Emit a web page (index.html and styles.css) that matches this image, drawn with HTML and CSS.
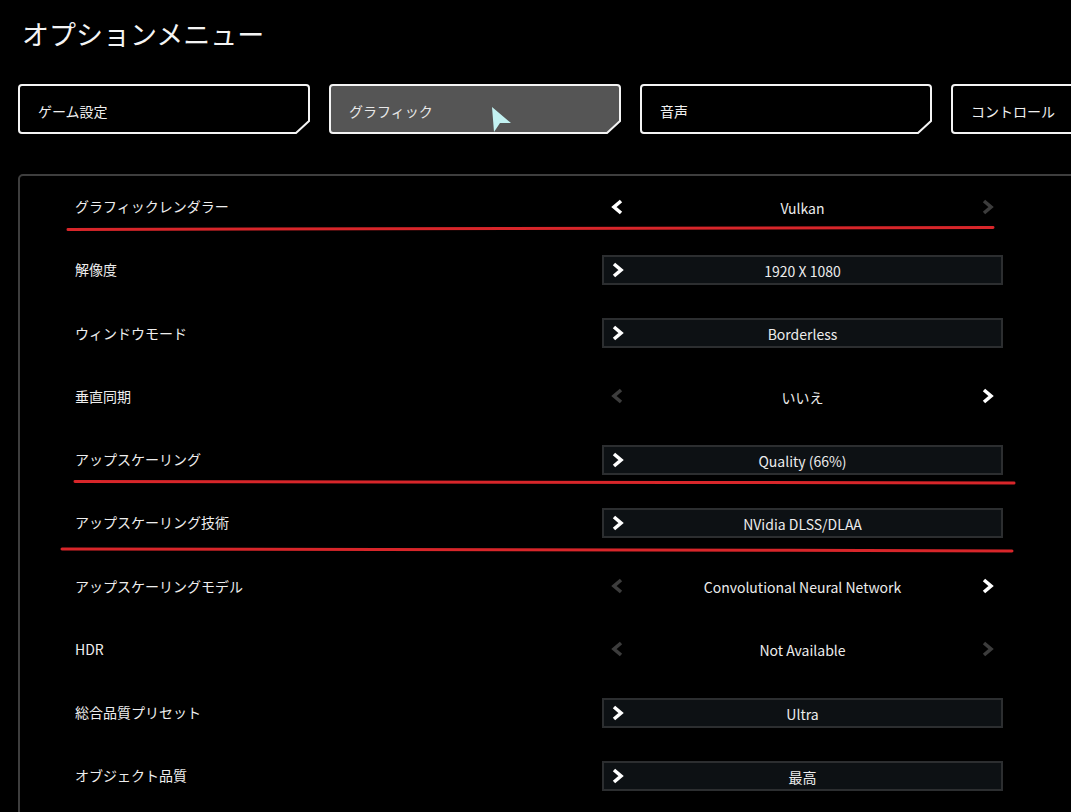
FILE: index.html
```html
<!DOCTYPE html>
<html lang="ja">
<head>
<meta charset="utf-8">
<title>オプションメニュー</title>
<link rel="stylesheet" href="styles.css">
</head>
<body>
<div class="page">
  <h1 class="title">オプションメニュー</h1>

  <nav class="tabs">
    <div class="tab"><svg class="tab-frame" viewBox="0 0 292 50"><path d="M4,1 H288 Q291,1 291,4 V37 L278,49 H4 Q1,49 1,46 V4 Q1,1 4,1 Z"/></svg><span>ゲーム設定</span></div>
    <div class="tab active"><svg class="tab-frame" viewBox="0 0 292 50"><path d="M4,1 H288 Q291,1 291,4 V37 L278,49 H4 Q1,49 1,46 V4 Q1,1 4,1 Z"/></svg><span>グラフィック</span></div>
    <div class="tab"><svg class="tab-frame" viewBox="0 0 292 50"><path d="M4,1 H288 Q291,1 291,4 V37 L278,49 H4 Q1,49 1,46 V4 Q1,1 4,1 Z"/></svg><span>音声</span></div>
    <div class="tab"><svg class="tab-frame" viewBox="0 0 292 50"><path d="M4,1 H288 Q291,1 291,4 V37 L278,49 H4 Q1,49 1,46 V4 Q1,1 4,1 Z"/></svg><span>コントロール</span></div>
  </nav>

  <section class="panel">
    <div class="row">
      <div class="label">グラフィックレンダラー</div>
      <div class="control">
        <svg class="chev" viewBox="0 0 12 16"><polyline points="10,2 3,8 10,14"/></svg>
        <span class="value">Vulkan</span>
        <svg class="chev off" viewBox="0 0 12 16"><polyline points="2,2 9,8 2,14"/></svg>
      </div>
    </div>
    <div class="row">
      <div class="label">解像度</div>
      <div class="control box">
        <svg class="chev" viewBox="0 0 12 16"><polyline points="2,2 9,8 2,14"/></svg>
        <span class="value">1920 X 1080</span>
        <span class="spacer"></span>
      </div>
    </div>
    <div class="row">
      <div class="label">ウィンドウモード</div>
      <div class="control box">
        <svg class="chev" viewBox="0 0 12 16"><polyline points="2,2 9,8 2,14"/></svg>
        <span class="value">Borderless</span>
        <span class="spacer"></span>
      </div>
    </div>
    <div class="row">
      <div class="label">垂直同期</div>
      <div class="control">
        <svg class="chev off" viewBox="0 0 12 16"><polyline points="10,2 3,8 10,14"/></svg>
        <span class="value">いいえ</span>
        <svg class="chev" viewBox="0 0 12 16"><polyline points="2,2 9,8 2,14"/></svg>
      </div>
    </div>
    <div class="row">
      <div class="label">アップスケーリング</div>
      <div class="control box">
        <svg class="chev" viewBox="0 0 12 16"><polyline points="2,2 9,8 2,14"/></svg>
        <span class="value">Quality (66%)</span>
        <span class="spacer"></span>
      </div>
    </div>
    <div class="row">
      <div class="label">アップスケーリング技術</div>
      <div class="control box">
        <svg class="chev" viewBox="0 0 12 16"><polyline points="2,2 9,8 2,14"/></svg>
        <span class="value">NVidia DLSS/DLAA</span>
        <span class="spacer"></span>
      </div>
    </div>
    <div class="row">
      <div class="label">アップスケーリングモデル</div>
      <div class="control">
        <svg class="chev off" viewBox="0 0 12 16"><polyline points="10,2 3,8 10,14"/></svg>
        <span class="value">Convolutional Neural Network</span>
        <svg class="chev" viewBox="0 0 12 16"><polyline points="2,2 9,8 2,14"/></svg>
      </div>
    </div>
    <div class="row">
      <div class="label">HDR</div>
      <div class="control">
        <svg class="chev off" viewBox="0 0 12 16"><polyline points="10,2 3,8 10,14"/></svg>
        <span class="value">Not Available</span>
        <svg class="chev off" viewBox="0 0 12 16"><polyline points="2,2 9,8 2,14"/></svg>
      </div>
    </div>
    <div class="row">
      <div class="label">総合品質プリセット</div>
      <div class="control box">
        <svg class="chev" viewBox="0 0 12 16"><polyline points="2,2 9,8 2,14"/></svg>
        <span class="value">Ultra</span>
        <span class="spacer"></span>
      </div>
    </div>
    <div class="row">
      <div class="label">オブジェクト品質</div>
      <div class="control box">
        <svg class="chev" viewBox="0 0 12 16"><polyline points="2,2 9,8 2,14"/></svg>
        <span class="value">最高</span>
        <span class="spacer"></span>
      </div>
    </div>
  </section>

  <svg class="cursor" viewBox="0 0 22 28"><polygon points="1,1 20,17 9,17 3,26"/></svg>

  <svg class="marks" viewBox="0 0 1071 812">
    <path d="M68,229.5 C400,229 700,228 993,227.5"/>
    <path d="M75,481.5 C400,482 700,482.5 1014,483"/>
    <path d="M62,549 C400,549.5 700,550 1012,551"/>
  </svg>
</div>
</body>
</html>
```

FILE: styles.css
```css
* { box-sizing: border-box; }

html, body {
  margin: 0;
  padding: 0;
  background: #000;
  overflow: hidden;
}

body {
  font-family: "Noto Sans CJK JP", "Noto Sans", sans-serif;
  color: #f2f2f2;
  width: 1071px;
  height: 812px;
}

.page {
  position: relative;
  width: 1071px;
  height: 812px;
  overflow: hidden;
  padding: 20px 0 0 18px;
}

.title {
  margin: 0 0 0 4px;
  font-size: 27px;
  font-weight: 400;
  line-height: 28px;
  letter-spacing: 0;
  color: #f4f4f4;
}

.tabs {
  display: flex;
  gap: 19px;
  margin-top: 36px;
  height: 50px;
  width: 1200px;
}

.tab {
  position: relative;
  flex: 0 0 292px;
  height: 50px;
  display: flex;
  align-items: center;
  padding-left: 20px;
  padding-top: 4px;
  font-size: 14px;
  color: #f0f0f0;
}

.tab span { position: relative; }

.tab-frame {
  position: absolute;
  inset: 0;
  width: 292px;
  height: 50px;
}

.tab-frame path {
  fill: #000;
  stroke: #f4f4f4;
  stroke-width: 2;
}

.tab.active .tab-frame path { fill: #555555; }
.tab.active { color: #e8e8e8; }

.panel {
  margin-top: 40px;
  width: 1120px;
  height: 700px;
  border: 2px solid #3e3e3e;
  border-radius: 5px;
  padding-top: 0;
}

.row {
  display: grid;
  grid-template-columns: 527px 401px;
  align-items: center;
  height: 63.25px;
  padding-left: 55px;
}

.label {
  font-size: 14px;
  color: #eeeeee;
  padding-bottom: 3px;
}

.control {
  display: flex;
  align-items: center;
  height: 30px;
  padding: 0 9px;
  margin-top: -2px;
}

.control.box {
  background: #0d1114;
  border: 2px solid #2c2e30;
  padding: 0 8px;
}

.value {
  flex: 1;
  text-align: center;
  font-size: 14px;
  color: #ececec;
  padding-top: 2px;
}

.chev {
  width: 12px;
  height: 16px;
  flex: 0 0 12px;
}

.chev polyline {
  fill: none;
  stroke: #ffffff;
  stroke-width: 3.6;
  stroke-linejoin: miter;
  stroke-linecap: butt;
}

.chev.off polyline { stroke: #3c3c3c; }

.spacer { width: 12px; flex: 0 0 12px; }

.cursor {
  position: absolute;
  left: 491px;
  top: 106px;
  width: 22px;
  height: 28px;
}

.cursor polygon {
  fill: #c3f2f2;
}

.marks {
  position: absolute;
  left: 0;
  top: 0;
  width: 1071px;
  height: 812px;
  pointer-events: none;
}

.marks path {
  fill: none;
  stroke: #d8262a;
  stroke-width: 3;
  stroke-linecap: round;
}
```
